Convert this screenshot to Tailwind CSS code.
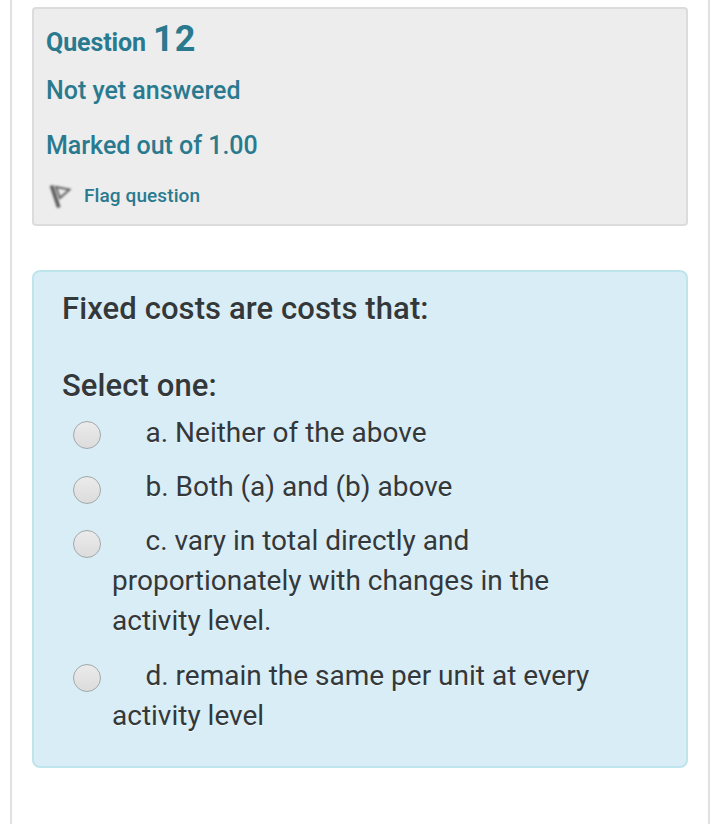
<!DOCTYPE html>
<html lang="en">
<head>
    <meta charset="UTF-8">
    <meta name="viewport" content="width=device-width, initial-scale=1.0">
    <title>Question 12</title>
    <script src="https://cdn.jsdelivr.net/npm/@tailwindcss/browser@4"></script>
</head>
<body class="bg-white font-['Roboto',sans-serif]">
    <main class="mx-[10px] h-[824px] border-x-2 border-[#e1e1e1] px-5 pt-[7px] overflow-hidden">
        <section class="h-[219px] rounded-sm border-2 border-[#dcdcdc] bg-[#ededed] px-3 text-[#2a7a8f] font-medium whitespace-nowrap">
            <h3 class="h-[61px] pt-[6px] text-[25px] leading-[48px] font-bold tracking-[-0.1px]">Question <span class="ml-px text-[36px] tracking-[1px]">12</span></h3>
            <div class="h-[55px] text-[25px] leading-[42px] tracking-[-0.02px]">Not yet answered</div>
            <div class="h-[54px] text-[25px] leading-[42px] tracking-[-0.02px]">Marked out of 1.00</div>
            <div class="flex items-center h-[33px]">
                <svg class="w-[26px] h-[30px] mr-3 blur-[0.8px]" viewBox="0 0 26 30" fill="none">
                    <path d="M5.5 4.5L12.8 26.5" stroke="#5c5c5c" stroke-width="3.8"/>
                    <path d="M10 6L23.5 8.5L14 17Z" stroke="#5f5f5f" stroke-width="1.9"/>
                </svg>
                <a href="#" class="text-[19px] leading-[30px] tracking-[0.1px]">Flag question</a>
            </div>
        </section>

        <section class="mt-[44px] h-[498px] rounded-lg border-2 border-[#bfe5ec] bg-[#d9edf6] px-7 text-[#33383b] text-shadow-[0_1px_0_rgba(255,255,255,0.5)] whitespace-nowrap">
            <h4 class="pt-[17px] text-[31px] leading-[40px] font-medium tracking-[0.1px]">Fixed costs are costs that:</h4>
            <p class="mt-[37px] text-[31px] leading-[40px] font-medium tracking-[0.1px]">Select one:</p>
            <div class="mt-[7px] flex flex-col gap-[14px] pl-[11px] text-[28px] leading-[40px]">
                <label class="flex items-start">
                    <span class="mt-[8px] mr-[11px] size-7 shrink-0 rounded-full border border-[#a2a8aa] bg-linear-to-b from-[#ebebeb] to-[#dcdcdc]"></span>
                    <span class="indent-[33.5px]">a. Neither of the above</span>
                </label>
                <label class="flex items-start">
                    <span class="mt-[9px] mr-[11px] size-7 shrink-0 rounded-full border border-[#a2a8aa] bg-linear-to-b from-[#ebebeb] to-[#dcdcdc]"></span>
                    <span class="indent-[33.5px]">b. Both (a) and (b) above</span>
                </label>
                <label class="flex items-start">
                    <span class="mt-[9px] mr-[11px] size-7 shrink-0 rounded-full border border-[#a2a8aa] bg-linear-to-b from-[#ebebeb] to-[#dcdcdc]"></span>
                    <span class="indent-[33.5px]">c. vary in total directly and<br><span class="block indent-0">proportionately with changes in the<br>activity level.</span></span>
                </label>
                <label class="flex items-start pt-px">
                    <span class="mt-[8px] mr-[11px] size-7 shrink-0 rounded-full border border-[#a2a8aa] bg-linear-to-b from-[#ebebeb] to-[#dcdcdc]"></span>
                    <span class="indent-[33.5px]">d. remain the same per unit at every<br><span class="block indent-0">activity level</span></span>
                </label>
            </div>
        </section>
    </main>
</body>
</html>
